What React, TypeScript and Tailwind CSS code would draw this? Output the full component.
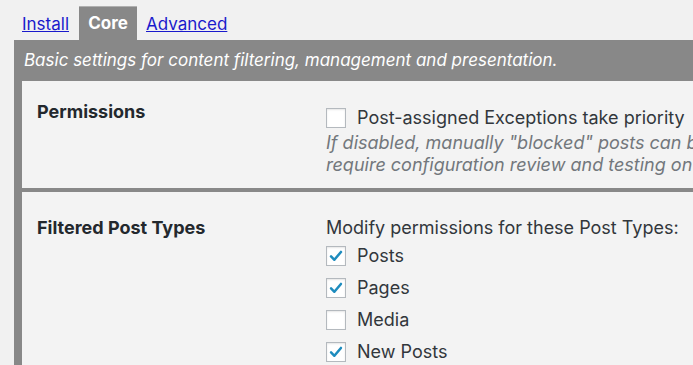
import React from "react";

function Check({ checked }: { checked?: boolean }) {
  return (
    <span className="flex h-[20px] w-[20px] shrink-0 items-center justify-center border border-[#b4b9be] bg-white shadow-[inset_0_1px_2px_rgba(0,0,0,0.1)]">
      {checked && (
        <svg viewBox="0 0 20 20" className="h-[18px] w-[18px]">
          <path d="M4.5 10.5 L8.2 14.2 L15.5 5.5" fill="none" stroke="#1e8cbe" strokeWidth="2.8" strokeLinecap="round" strokeLinejoin="round" />
        </svg>
      )}
    </span>
  );
}

const postTypes = [
  { label: "Posts", checked: true },
  { label: "Pages", checked: true },
  { label: "Media", checked: false },
  { label: "New Posts", checked: true },
];

export default function App() {
  return (
    <div className="h-[365px] w-[693px] overflow-hidden bg-[#f1f1f1] font-['Inter',sans-serif]">
      <div className="flex h-[40px] items-end pl-[22px]">
        <a href="#" className="pb-[5px] text-[17px] leading-[22px] text-[#1a1acc] underline">Install</a>
        <span className="ml-[10px] mr-[9px] flex h-[34px] w-[58px] items-center justify-center border-t border-[#b0b0b0] bg-[#888888] text-[17px] font-bold text-white">Core</span>
        <a href="#" className="pb-[5px] text-[17px] leading-[22px] text-[#1a1acc] underline">Advanced</a>
      </div>
      <div className="ml-[14px] border-l-[8px] border-[#888888]">
        <div className="-ml-[8px] flex h-[41px] items-center whitespace-nowrap bg-[#888888] pl-[10px] text-[17px] italic text-white">
          Basic settings for content filtering, management and presentation.
        </div>
        <div className="flex h-[107px] bg-[#f3f3f3]">
          <div className="w-[304px] shrink-0 pl-[15px] pt-[17px] text-[18px] font-bold text-[#23282d]">Permissions</div>
          <div className="whitespace-nowrap pt-[23px]">
            <label className="flex items-center gap-[11px] text-[18px] text-[#32373c]">
              <Check />
              Post-assigned Exceptions take priority
            </label>
            <p className="mt-[1px] text-[18px] italic leading-[22px] text-[#72777c]">
              If disabled, manually "blocked" posts can be
              <br />
              require configuration review and testing on
            </p>
          </div>
        </div>
        <div className="h-[4px] bg-[#888888]" />
        <div className="flex h-[200px] bg-[#f3f3f3]">
          <div className="w-[304px] shrink-0 pl-[15px] pt-[22px] text-[18px] font-bold text-[#23282d]">Filtered Post Types</div>
          <div className="whitespace-nowrap pt-[25px] text-[18px] text-[#32373c]">
            <p className="leading-[22px]">Modify permissions for these Post Types:</p>
            <div className="mt-[7px] flex flex-col gap-[12px]">
              {postTypes.map((t) => (
                <label key={t.label} className="flex items-center gap-[11px] leading-[20px]">
                  <Check checked={t.checked} />
                  {t.label}
                </label>
              ))}
            </div>
          </div>
        </div>
      </div>
    </div>
  );
}
